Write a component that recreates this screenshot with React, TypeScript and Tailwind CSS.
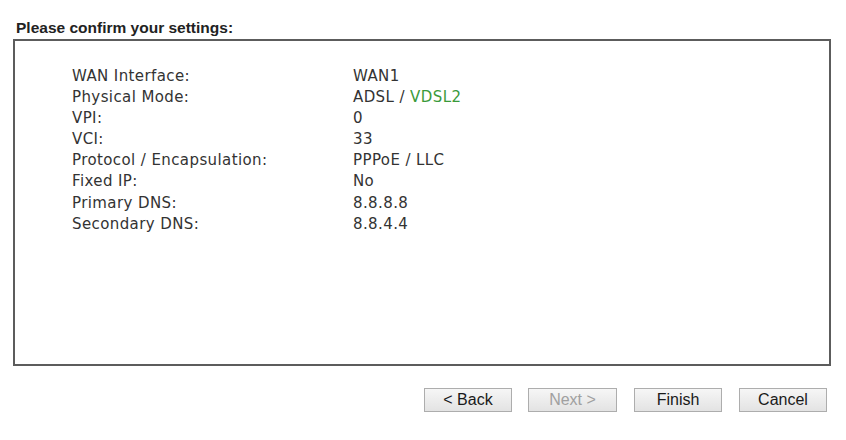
import React from "react";

const rows: [string, React.ReactNode][] = [
  ["WAN Interface:", "WAN1"],
  ["Physical Mode:", <>ADSL / <span className="text-[#3a9a3a]">VDSL2</span></>],
  ["VPI:", "0"],
  ["VCI:", "33"],
  ["Protocol / Encapsulation:", "PPPoE / LLC"],
  ["Fixed IP:", "No"],
  ["Primary DNS:", "8.8.8.8"],
  ["Secondary DNS:", "8.8.4.4"],
];

function Btn({ label, disabled, w }: { label: string; disabled?: boolean; w: string }) {
  return (
    <button
      className={
        "h-[24px] border border-[#adadad] bg-gradient-to-b from-[#f6f6f6] to-[#e3e3e3] text-[16px] leading-none " +
        w +
        " " +
        (disabled ? "text-[#a0a0a0]" : "text-[#1a1a1a]")
      }
      style={{ fontFamily: '"Liberation Sans", Arial, sans-serif' }}
    >
      {label}
    </button>
  );
}

export default function App() {
  return (
    <div className="w-[846px] h-[440px] bg-white pt-[19px]">
      <div
        className="pl-[16px] text-[15.5px] font-bold text-[#222] leading-[17px]"
        style={{ fontFamily: '"Liberation Sans", Arial, sans-serif' }}
      >
        Please confirm your settings:
      </div>
      <div className="ml-[13px] mt-[3px] w-[818px] h-[327px] border-2 border-[#5c5c5c] pt-[25px] pl-[57px]">
        <div
          className="grid grid-cols-[281px_1fr] text-[15px] tracking-[0.4px] leading-[21.1px] text-[#333]"
          style={{ fontFamily: '"DejaVu Sans", Verdana, sans-serif' }}
        >
          {rows.map(([k, v]) => (
            <React.Fragment key={k}>
              <div>{k}</div>
              <div>{v}</div>
            </React.Fragment>
          ))}
        </div>
      </div>
      <div className="flex justify-end pr-[19px] mt-[22px]">
        <Btn label="< Back" w="w-[88px]" />
        <div className="w-[16px]" />
        <Btn label="Next >" disabled w="w-[89px]" />
        <div className="w-[17px]" />
        <Btn label="Finish" w="w-[88px]" />
        <div className="w-[17px]" />
        <Btn label="Cancel" w="w-[88px]" />
      </div>
    </div>
  );
}
